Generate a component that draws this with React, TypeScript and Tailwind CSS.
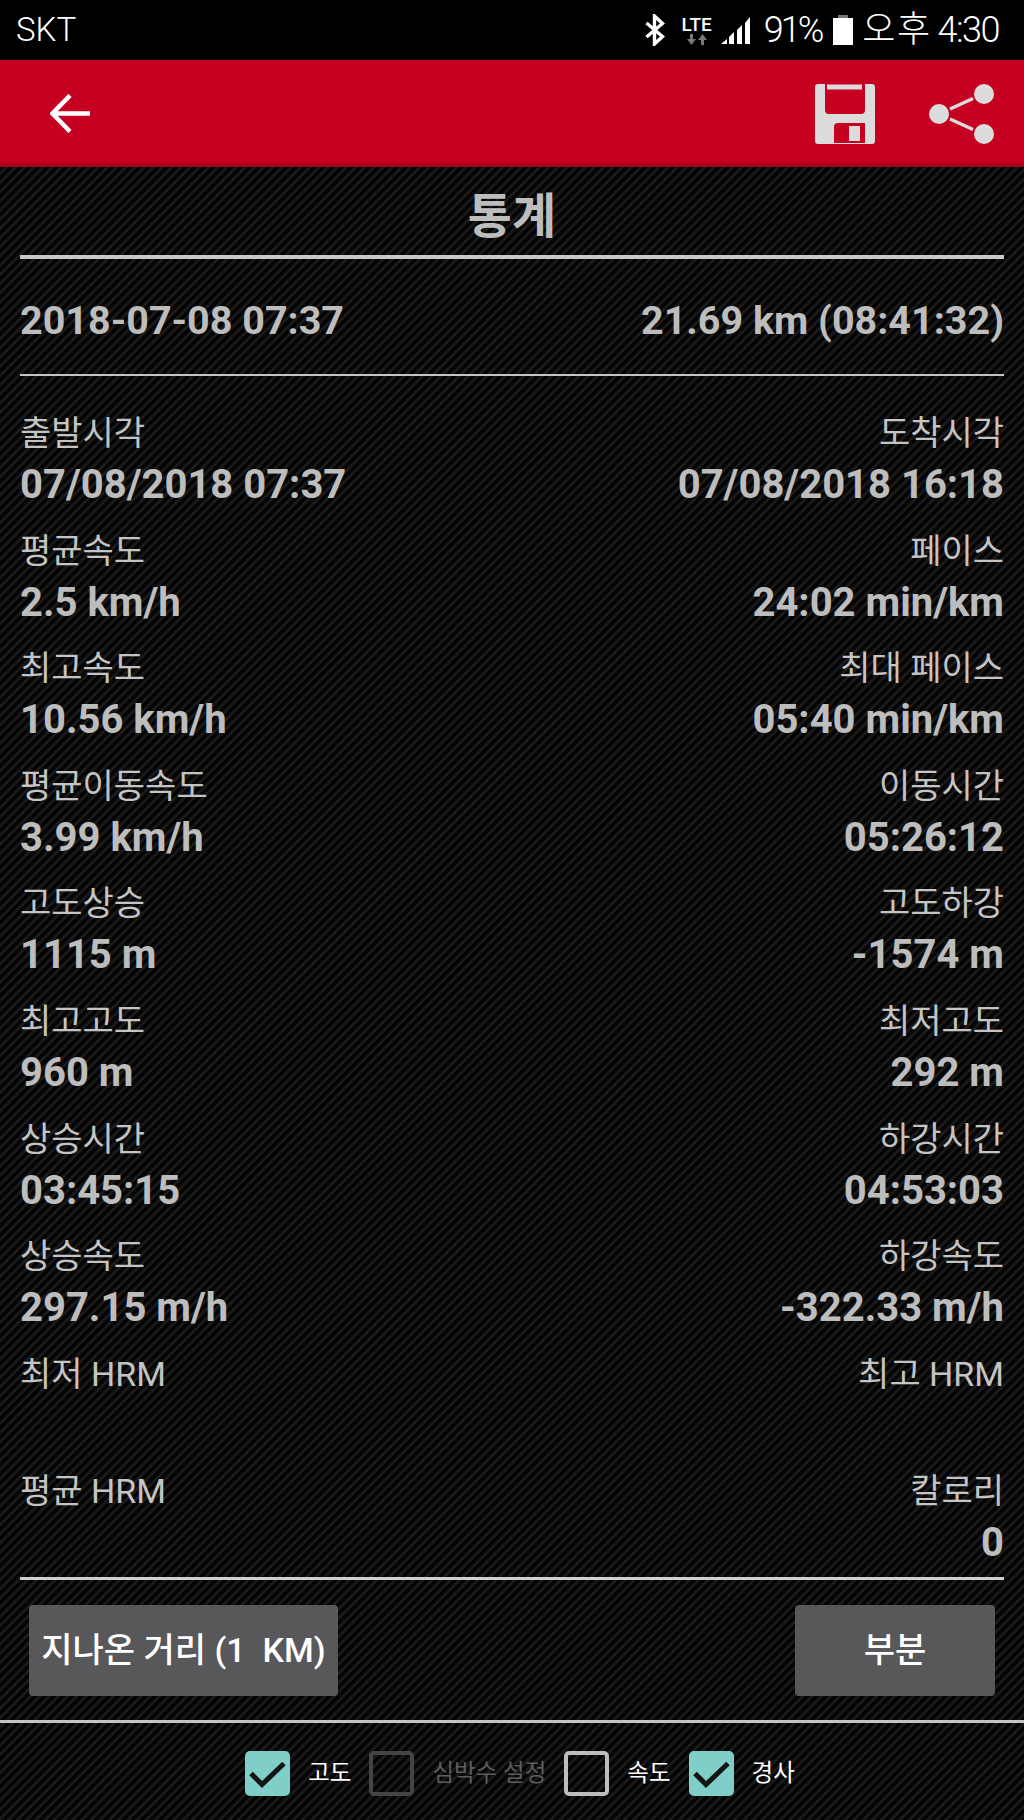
import React from "react";

const rows: [string, string, string, string][] = [
  ["출발시각", "07/08/2018 07:37", "도착시각", "07/08/2018 16:18"],
  ["평균속도", "2.5 km/h", "페이스", "24:02 min/km"],
  ["최고속도", "10.56 km/h", "최대 페이스", "05:40 min/km"],
  ["평균이동속도", "3.99 km/h", "이동시간", "05:26:12"],
  ["고도상승", "1115 m", "고도하강", "-1574 m"],
  ["최고고도", "960 m", "최저고도", "292 m"],
  ["상승시간", "03:45:15", "하강시간", "04:53:03"],
  ["상승속도", "297.15 m/h", "하강속도", "-322.33 m/h"],
  ["최저 HRM", "", "최고 HRM", ""],
  ["평균 HRM", "", "칼로리", "0"],
];

function Stat({ label, value, right }: { label: string; value: string; right?: boolean }) {
  return (
    <div className={right ? "text-right" : "text-left"}>
      <div className="h-[51px] text-[34px] leading-[51px] text-[#c4c4c4]">{label}</div>
      <div className="h-[51px] text-[40px] leading-[51px] font-bold text-[#bdbdbd]">{value}</div>
    </div>
  );
}

function Check({ label, state }: { label: string; state: "on" | "off" | "disabled" }) {
  return (
    <div className="flex items-center">
      {state === "on" ? (
        <div className="flex h-[45px] w-[45px] items-center justify-center rounded-[5px] bg-[#7fcfc8]">
          <svg width="45" height="45" viewBox="0 0 45 45" fill="none">
            <path d="M6 22.5 L17 33.5 L39 12.5" stroke="#141414" strokeWidth="5" />
          </svg>
        </div>
      ) : (
        <div
          className={
            state === "off"
              ? "h-[45px] w-[45px] rounded-[5px] border-[4px] border-[#bdbdbd]"
              : "h-[45px] w-[45px] rounded-[5px] border-[4px] border-[#444444]"
          }
        />
      )}
      <span
        className={
          state === "disabled"
            ? "ml-[18px] text-[23.5px] leading-[45px] text-[#5c5c5c]"
            : "ml-[18px] text-[23.5px] leading-[45px] text-white"
        }
      >
        {label}
      </span>
    </div>
  );
}

export default function App() {
  return (
    <div className="flex h-[1820px] w-[1024px] flex-col overflow-hidden bg-black font-['Roboto','Noto_Sans_CJK_KR',sans-serif]">
      <div className="flex h-[60px] items-center justify-between pl-[16px] pr-[25px] text-white">
        <span className="text-[33px] leading-[60px] font-light">SKT</span>
        <div className="flex items-center">
          <svg width="20" height="32" viewBox="0 0 20 32" fill="none" className="mr-[16px]">
            <path d="M1.5 9 L17.5 22.5 L9.5 30 V2 L17.5 9.5 L1.5 23" stroke="white" strokeWidth="3.4" />
          </svg>
          <div className="mr-[8px] flex w-[32px] flex-col items-center">
            <span className="text-[19px] leading-[19px] font-medium">LTE</span>
            <svg width="20" height="11" viewBox="0 0 20 11" fill="#777777">
              <path d="M3 0 H6 V5 H9 L4.5 11 L0 5 H3 Z" />
              <path d="M14 11 H17 V6 H20 L15.5 0 L11 6 H14 Z" />
            </svg>
          </div>
          <svg width="30" height="32" viewBox="0 0 30 32" fill="white" className="mr-[13px]">
            <path d="M0 30 L6 25 V30 Z" />
            <path d="M8 23 L13 18 V30 H8 Z" />
            <path d="M16 16 L21 11 V30 H16 Z" />
            <path d="M24 9 L29 3 V30 H24 Z" />
          </svg>
          <span className="text-[36px] leading-[60px] font-light tracking-[-3px]">91%</span>
          <svg width="20" height="30" viewBox="0 0 20 30" fill="white" className="ml-[12px] mr-[9px]">
            <rect x="5" y="0" width="10" height="3" fill="#777777" />
            <rect x="0" y="3" width="20" height="27" />
          </svg>
          <span className="text-[36px] leading-[60px] font-light tracking-[1.5px]">오후</span>
          <span className="ml-[6px] text-[36px] leading-[60px] font-light tracking-[-1.5px]">4:30</span>
        </div>
      </div>

      <div className="flex h-[107px] items-center justify-between bg-[#c60021] pl-[50px] pr-[30px] shadow-[inset_0_-5px_4px_-3px_rgba(0,0,0,0.3)]">
        <svg width="40" height="40" viewBox="0 0 40 40" fill="none">
          <path d="M20 1.5 L2.5 19.5 L20 37.5 M2.5 19.5 H40" stroke="white" strokeWidth="4.5" />
        </svg>
        <div className="flex items-center gap-[54px]">
          <svg width="60" height="60" viewBox="0 0 60 60" fill="#dcdcdc">
            <path
              fillRule="evenodd"
              d="M3 0 H57 Q60 0 60 3 V57 Q60 60 57 60 H3 Q0 60 0 57 V3 Q0 0 3 0 Z M10 0 V26 Q10 30 14 30 H46 Q50 30 50 26 V0 Z M19 59 V43 Q19 39 23 39 H50 V59 Z"
            />
            <rect x="12" y="0.5" width="35" height="5" />
            <rect x="34" y="42" width="11" height="15" />
          </svg>
          <svg width="65" height="60" viewBox="0 0 65 60" fill="#dcdcdc">
            <circle cx="10" cy="30" r="10" />
            <circle cx="55" cy="10" r="10" />
            <circle cx="55" cy="50" r="10" />
            <path d="M21 25 L44 14.5 M21 35 L44 45.5" stroke="#dcdcdc" strokeWidth="3.5" fill="none" />
          </svg>
        </div>
      </div>

      <div className="flex flex-1 flex-col bg-[#0c0c0c] bg-[repeating-linear-gradient(135deg,#040404_0px,#040404_2.5px,#1b1b1b_4px,#1b1b1b_5.5px,#040404_6.5px)]">
        <div className="px-[20px]">
          <div className="h-[92px] border-b-[4px] border-b-[#c8c8c8] pt-[12px] text-center text-[48px] leading-[75px] font-bold text-[#bdbdbd]">
            통계
          </div>
          <div className="flex h-[117px] items-center justify-between border-b-[2px] border-b-[#c4c4c4] pt-[9px] text-[39.5px] font-bold text-[#bdbdbd]">
            <span>2018-07-08 07:37</span>
            <span>21.69 km (08:41:32)</span>
          </div>
          <div className="flex h-[1204px] flex-col border-b-[3px] border-b-[#d0d0d0] pt-[32px]">
            {rows.map((r) => (
              <div key={r[0]} className="flex h-[117.6px] shrink-0 justify-between">
                <Stat label={r[0]} value={r[1]} />
                <Stat label={r[2]} value={r[3]} right />
              </div>
            ))}
          </div>
        </div>

        <div className="flex h-[143px] items-center justify-between border-b-[3px] border-b-[#c4c4c4] px-[29px]">
          <div className="flex h-[91px] w-[309px] items-center justify-center rounded-[4px] bg-[#58585a] text-[34px] font-medium text-white">
            지나온 거리 (1&nbsp;&nbsp;KM)
          </div>
          <div className="flex h-[91px] w-[200px] items-center justify-center rounded-[4px] bg-[#58585a] text-[34px] font-medium text-white">
            부분
          </div>
        </div>

        <div className="flex flex-1 items-start justify-center gap-[18px] pl-[16px] pt-[28px]">
          <Check label="고도" state="on" />
          <Check label="심박수 설정" state="disabled" />
          <Check label="속도" state="off" />
          <Check label="경사" state="on" />
        </div>
      </div>
    </div>
  );
}
